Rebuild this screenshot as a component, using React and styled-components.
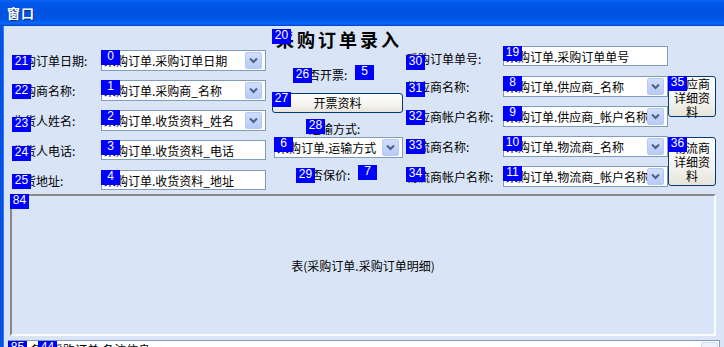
import React from 'react';
import styled, { createGlobalStyle } from 'styled-components';

const GlobalStyle = createGlobalStyle`
  html, body {
    margin: 0;
    padding: 0;
  }
  body {
    width: 724px;
    height: 347px;
    overflow: hidden;
    background: #d9e5f7;
    font-family: "Noto Sans CJK SC", "Liberation Sans", sans-serif;
    font-size: 12px;
    color: #000;
  }
`;

const Window = styled.div`
  width: 724px;
  height: 347px;
  display: flex;
  flex-direction: column;
  overflow: hidden;
`;

const TitleBar = styled.div`
  height: 26px;
  flex-shrink: 0;
  display: flex;
  align-items: center;
  padding-left: 7px;
  padding-bottom: 1px;
  box-sizing: border-box;
  background: linear-gradient(
    to bottom,
    #0a63f2 0%,
    #0058ea 12%,
    #0053e0 45%,
    #0056e6 75%,
    #0a68fc 88%,
    #0a5cf0 94%,
    #0040c0 100%
  );
  color: #fff;
  font-weight: bold;
  font-size: 13px;
  letter-spacing: 1px;
  text-shadow: 1px 1px 0 #0a2a8a;
`;

const Body = styled.div`
  flex: 1;
  display: flex;
  flex-direction: column;
  background: #d9e5f7;
  border-left: 3px solid #0850e0;
  box-shadow: inset 1px 0 0 #2a7cff;
`;

const Form = styled.div`
  height: 168px;
  flex-shrink: 0;
  display: flex;
  align-items: flex-start;
  padding-left: 9px;
`;

const Badge = styled.span`
  position: absolute;
  left: ${p => p.$left || 0}px;
  top: ${p => p.$top || 0}px;
  width: 19px;
  height: 15px;
  background: #0000ff;
  color: #fff;
  font-family: "Liberation Sans", sans-serif;
  font-size: 12px;
  font-weight: normal;
  letter-spacing: 0;
  line-height: 13px;
  text-align: center;
  z-index: 2;
`;

const Label = styled.div`
  position: relative;
  grid-column: 1;
  display: flex;
  align-items: center;
  box-sizing: border-box;
  height: 21px;
  padding-top: ${p => p.$shift || 0}px;
  white-space: nowrap;
`;

const Field = styled.div`
  position: relative;
  grid-column: 2;
  box-sizing: border-box;
  height: ${p => (p.$combo ? 21 : 20)}px;
  width: ${p => p.$width || 165}px;
  margin-left: ${p => p.$left || 0}px;
  background: #fff;
  border: 1px solid #7f9db9;
  display: flex;
  align-items: center;
  padding-left: 2px;
  align-self: start;
`;

const FieldGrid = styled.div`
  display: grid;
  grid-template-columns: ${p => p.$cols};
  grid-auto-rows: 21px;
  row-gap: 9px;
  margin-top: ${p => p.$top}px;
  margin-left: ${p => p.$left || 0}px;
`;

const FieldText = styled.span`
  flex: 1;
  min-width: 0;
  overflow: hidden;
  white-space: nowrap;
`;

const DropButton = styled.span`
  flex-shrink: 0;
  width: 15px;
  height: 15px;
  margin-right: 3px;
  border-radius: 2px;
  border: 1px solid #b6c9f4;
  background: linear-gradient(to bottom, #d2defc, #b7cbf9);
  display: flex;
  align-items: center;
  justify-content: center;
`;

const Chevron = () => (
  <svg width="9" height="7" viewBox="0 0 9 7">
    <path d="M1 1.5 L4.5 5 L8 1.5" fill="none" stroke="#4d6185" strokeWidth="2" />
  </svg>
);

const XpButton = styled.button`
  position: relative;
  box-sizing: border-box;
  width: ${p => p.$width}px;
  height: ${p => p.$height}px;
  margin: ${p => p.$margin || 0};
  padding: 0 4px;
  border: 1px solid #003c74;
  border-radius: 3px;
  background: linear-gradient(to bottom, #ffffff 0%, #f4f3ee 60%, #e6e4da 100%);
  font-family: "Noto Sans CJK SC", sans-serif;
  font-size: 12px;
  line-height: 14px;
  color: #000;
  text-align: center;
  align-self: start;
`;

const SideButton = styled(XpButton)`
  grid-column: 3;
  grid-row: ${p => p.$row} / span 2;
`;

const MidCol = styled.div`
  width: 131px;
  margin-left: 6px;
  padding-top: 3px;
  display: flex;
  flex-direction: column;
`;

const Title = styled.div`
  position: relative;
  height: 20px;
  padding-left: 4px;
  font-size: 18px;
  font-weight: bold;
  line-height: 21px;
  letter-spacing: 3px;
  white-space: nowrap;
`;

const CheckRow = styled.div`
  position: relative;
  height: 18px;
  margin-top: ${p => p.$top}px;
  display: flex;
  align-items: center;
  white-space: nowrap;
`;

const CheckText = styled.span`
  margin-left: ${p => p.$left}px;
`;

const Table = styled.div`
  position: relative;
  height: 142px;
  flex-shrink: 0;
  margin: 0 8px 0 7px;
  box-sizing: border-box;
  border: 2px solid;
  border-color: #8a8985 #fbfbfb #fbfbfb #8a8985;
  display: flex;
  align-items: center;
  justify-content: center;
`;

const Memo = styled.div`
  position: relative;
  height: 24px;
  margin: 4px 4px 0 5px;
  background: #fff;
  border: 1px solid #7f9db9;
  display: flex;
  align-items: flex-start;
  padding-left: 21px;
  white-space: nowrap;
`;

const MemoText = styled.span`
  margin-left: 9px;
`;

const ScrollUp = styled.span`
  position: absolute;
  right: 1px;
  top: 1px;
  width: 15px;
  height: 15px;
  border: 1px solid #d0dcf4;
  border-radius: 2px;
  background: #eef2fb;
`;

const leftRows = [
  { lb: '21', label: '采购订单日期:', bt: 5, fb: '0', text: '采购订单.采购订单日期', combo: true },
  { lb: '22', label: '采购商名称:', bt: 4, fb: '1', text: '采购订单.采购商_名称', combo: true },
  { lb: '23', label: '收货人姓名:', bt: 7, fb: '2', text: '采购订单.收货资料_姓名', combo: true },
  { lb: '24', label: '收货人电话:', bt: 6, fb: '3', text: '采购订单.收货资料_电话' },
  { lb: '25', label: '收货地址:', bt: 4, fb: '4', text: '采购订单.收货资料_地址' },
];

const rightRows = [
  { lb: '30', label: '采购订单单号:', bt: 9, shift: 3, fb: '19', text: '采购订单.采购订单单号' },
  { lb: '31', label: '供应商名称:', bt: 6, fb: '8', text: '采购订单.供应商_名称', combo: true },
  { lb: '32', label: '供应商帐户名称:', bt: 4, fb: '9', text: '采购订单.供应商_帐户名称', combo: true },
  { lb: '33', label: '物流商名称:', bt: 3, fb: '10', text: '采购订单.物流商_名称', combo: true },
  { lb: '34', label: '物流商帐户名称:', bt: 1, fb: '11', text: '采购订单.物流商_帐户名称', combo: true },
];

const Input = ({ badge, text, combo, width, left }) => (
  <Field $combo={combo} $width={width} $left={left}>
    <Badge $left={-1} $top={-1}>{badge}</Badge>
    <FieldText>{text}</FieldText>
    {combo && (
      <DropButton>
        <Chevron />
      </DropButton>
    )}
  </Field>
);

const FieldRows = ({ rows }) =>
  rows.map(r => (
    <React.Fragment key={r.lb}>
      <Label $shift={r.shift}>
        <Badge $top={r.bt}>{r.lb}</Badge>
        {r.label}
      </Label>
      <Input badge={r.fb} text={r.text} combo={r.combo} />
    </React.Fragment>
  ));

const App = () => {
  return (
    <Window>
      <GlobalStyle />
      <TitleBar>窗口</TitleBar>
      <Body>
        <Form>
          <FieldGrid $cols="89px 165px" $top={24}>
            <FieldRows rows={leftRows} />
          </FieldGrid>

          <MidCol>
            <Title>
              <Badge>20</Badge>
              采购订单录入
            </Title>
            <CheckRow $top={16}>
              <Badge $left={21} $top={3}>26</Badge>
              <CheckText $left={24}>是否开票:</CheckText>
              <Badge $left={83} $top={0}>5</Badge>
            </CheckRow>
            <XpButton $width={131} $height={20} $margin="10px 0 0 0">
              <Badge $left={-1} $top={-2}>27</Badge>
              开票资料
            </XpButton>
            <CheckRow $top={6}>
              <Badge $left={34} $top={0}>28</Badge>
              <CheckText $left={37}>运输方式:</CheckText>
            </CheckRow>
            <Input badge="6" text="采购订单.运输方式" combo width={129} left={2} />
            <CheckRow $top={7}>
              <Badge $left={24} $top={3}>29</Badge>
              <CheckText $left={27}>是否保价:</CheckText>
              <Badge $left={86} $top={0}>7</Badge>
            </CheckRow>
          </MidCol>

          <FieldGrid $cols="97px 165px 48px" $top={20} $left={3}>
            <FieldRows rows={rightRows} />
            <SideButton $width={48} $height={41} $row={2}>
              <Badge $left={-1} $top={-1}>35</Badge>
              供应商详细资料
            </SideButton>
            <SideButton $width={48} $height={49} $row={4} $margin="1px 0 0 0">
              <Badge $left={-1} $top={-1}>36</Badge>
              物流商详细资料
            </SideButton>
          </FieldGrid>
        </Form>

        <Table>
          <Badge $left={-2} $top={-2}>84</Badge>
          表(采购订单.采购订单明细)
        </Table>

        <Memo>
          <Badge $left={-1} $top={0}>85</Badge>
          <span>备</span>
          <Badge $left={29} $top={0}>44</Badge>
          <MemoText>采购订单.备注信息</MemoText>
          <ScrollUp />
        </Memo>
      </Body>
    </Window>
  );
};

export default App;
